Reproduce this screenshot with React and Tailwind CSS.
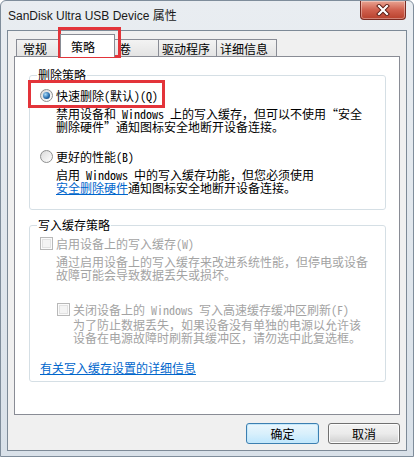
import React from "react";

const bodyFont = "font-['Noto_Sans_Mono_CJK_SC','Noto_Sans_CJK_SC',sans-serif]";
const uiFont = "font-['Noto_Sans_CJK_SC',sans-serif]";

function Radio({ checked }) {
  return (
    <span className="flex h-[13px] w-[13px] shrink-0 items-center justify-center rounded-full border border-[#8e8f8f] bg-gradient-to-br from-[#d8d8d8] to-[#ffffff]">
      {checked ? (
        <span className="h-[7px] w-[7px] rounded-full bg-[radial-gradient(circle_at_35%_35%,#a9dbf8,#2a6fb0_55%,#0c3560)]" />
      ) : (
        <span className="h-[9px] w-[9px] rounded-full bg-gradient-to-br from-[#dedede] to-[#fbfbfb]" />
      )}
    </span>
  );
}

function Check() {
  return (
    <span className="flex h-[13px] w-[13px] shrink-0 items-center justify-center border border-[#b8b8b8] bg-[#fbfbfb]">
      <span className="h-[9px] w-[9px] border border-[#e2e2e2] bg-[#f4f4f4]" />
    </span>
  );
}

function Tab({ label, w, selected, pl }) {
  if (selected) {
    return (
      <div
        className={`relative z-10 -mx-[2px] flex h-[23px] items-start border border-b-0 border-[#898c95] bg-white pt-[3px] ${w} ${pl}`}
      >
        {label}
      </div>
    );
  }
  return (
    <div
      className={`flex h-[18px] items-center border border-b-0 border-l-0 first:border-l border-[#898c95] bg-gradient-to-b from-[#f3f3f3] to-[#e3e3e3] ${w} ${pl}`}
    >
      {label}
    </div>
  );
}

export default function App() {
  return (
    <div className="relative h-[457px] w-[414px] overflow-hidden rounded-t-[6px] border border-[#7f8d9b] bg-gradient-to-b from-[#e9edf1] to-[#d9e1e9] text-black">
      {/* title bar */}
      <div className="flex h-[29px] items-center pl-[7px] font-['Liberation_Sans','Noto_Sans_CJK_SC',sans-serif] text-[12px] text-[#1a1a1a]">
        SanDisk Ultra USB Device 属性
      </div>
      <div className="absolute right-[7px] top-0 flex h-[19px] w-[46px] items-center justify-center rounded-b-[4px] border border-t-0 border-[#7a2b22] bg-gradient-to-b from-[#e8a392] via-[#d0604e] to-[#b8402c] shadow-[inset_0_0_0_1px_rgba(255,255,255,0.35)]">
        <svg width="16" height="12" viewBox="0 0 16 12">
          <path d="M4 2 L12 10 M12 2 L4 10" stroke="#5a1a12" strokeWidth="4" strokeLinecap="square" />
          <path d="M4 2 L12 10 M12 2 L4 10" stroke="#ffffff" strokeWidth="2.2" strokeLinecap="square" />
        </svg>
      </div>

      {/* client */}
      <div className="mx-[6px] flex h-[421px] flex-col border border-[#7d8a97] bg-[#f0f0f0] px-[6px]">
        {/* tabs */}
        <div className={`mt-[3px] -mb-px flex h-[23px] items-end pl-[2px] text-[12px] ${uiFont}`}>
          <Tab label="常规" w="w-[46px]" pl="pl-[6px]" />
          <Tab label="策略" w="w-[55px]" pl="pl-[10px]" selected />
          <Tab label="卷" w="w-[46px]" pl="pl-[6px]" />
          <Tab label="驱动程序" w="w-[58px]" pl="pl-[3px]" />
          <Tab label="详细信息" w="w-[60px]" pl="pl-[3px]" />
        </div>

        {/* panel */}
        <div className={`flex h-[359px] flex-col border border-[#898c95] bg-white px-[14px] text-[12px] ${bodyFont}`}>
          <fieldset className="mt-[12px] w-[357px] rounded-[3px] border border-[#d5dfe5] px-[10px] pb-[15px]">
            <legend className="ml-[-3px] px-[1px] leading-[12px]">删除策略</legend>
            <div className="mt-[8px] flex h-[13px] items-center gap-[3px] leading-[13px]">
              <Radio checked />
              <span>快速删除(默认)(Q)</span>
            </div>
            <div className="mt-[5px] pl-[16px] leading-[13px]">
              <div>禁用设备和 Windows 上的写入缓存，但可以不使用“安全</div>
              <div>删除硬件”通知图标安全地断开设备连接。</div>
            </div>
            <div className="mt-[17px] flex h-[13px] items-center gap-[3px] leading-[13px]">
              <Radio />
              <span>更好的性能(B)</span>
            </div>
            <div className="mt-[5px] pl-[16px] leading-[13px]">
              <div>启用 Windows 中的写入缓存功能，但您必须使用</div>
              <div>
                <span className="text-[#0066cc] underline">安全删除硬件</span>通知图标安全地断开设备连接。
              </div>
            </div>
          </fieldset>

          <fieldset className="mt-[9px] w-[357px] rounded-[3px] border border-[#d5dfe5] px-[10px] pb-[7px]">
            <legend className="ml-[-3px] px-[1px] leading-[12px]">写入缓存策略</legend>
            <div className="mt-[6px] flex h-[13px] items-center gap-[3px] leading-[13px] text-[#a3a3a3]">
              <Check />
              <span>启用设备上的写入缓存(W)</span>
            </div>
            <div className="mt-[5px] pl-[16px] leading-[13px] text-[#a3a3a3]">
              <div>通过启用设备上的写入缓存来改进系统性能，但停电或设备</div>
              <div>故障可能会导致数据丢失或损坏。</div>
            </div>
            <div className="mt-[22px] flex h-[13px] items-center gap-[3px] pl-[17px] leading-[13px] text-[#a3a3a3]">
              <Check />
              <span>关闭设备上的 Windows 写入高速缓存缓冲区刷新(F)</span>
            </div>
            <div className="mt-[2px] pl-[33px] leading-[13px] text-[#a3a3a3]">
              <div>为了防止数据丢失，如果设备没有单独的电源以允许该</div>
              <div>设备在电源故障时刷新其缓冲区，请勿选中此复选框。</div>
            </div>
            <div className="mt-[17px] leading-[13px]">
              <span className="text-[#0066cc] underline">有关写入缓存设置的详细信息</span>
            </div>
          </fieldset>
        </div>

        {/* buttons */}
        <div className={`mt-[8px] flex justify-end gap-[9px] text-[12px] ${uiFont}`}>
          <button className="flex h-[21px] w-[73px] items-center justify-center rounded-[3px] border border-[#3c7fb1] bg-gradient-to-b from-[#eaf6fd] via-[#d9f0fc] to-[#bee6fd] shadow-[inset_0_0_0_1px_#c6e8fa]">
            确定
          </button>
          <button className="flex h-[21px] w-[72px] items-center justify-center rounded-[3px] border border-[#707070] bg-gradient-to-b from-[#f2f2f2] via-[#ebebeb] to-[#cfcfcf] shadow-[inset_0_0_0_1px_#fcfcfc]">
            取消
          </button>
        </div>
      </div>

      {/* annotation boxes */}
      <div className="pointer-events-none absolute left-[57px] top-[26px] h-[31px] w-[63px] border-[3px] border-[#e3343a]" />
      <div className="pointer-events-none absolute left-[27px] top-[79px] h-[28px] w-[137px] border-[3px] border-[#e3343a]" />
    </div>
  );
}
